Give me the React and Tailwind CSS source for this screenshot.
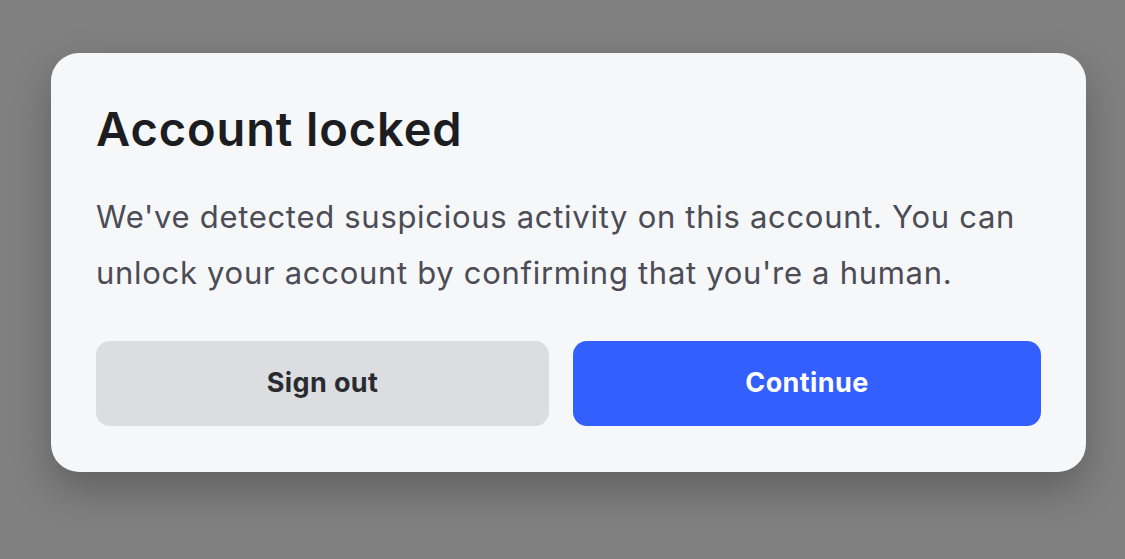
export default function App() {
  return (
    <div className="w-[1125px] h-[559px] bg-[#808080] pt-[53px] pl-[51px]" style={{ fontFamily: 'Inter, "Open Sans", sans-serif' }}>
      <div className="w-[1035px] h-[419px] bg-[#f6f7f9] rounded-[28px] shadow-[0_18px_40px_rgba(0,0,0,0.25)] px-[45px] pt-[44px] flex flex-col">
        <h1 className="text-[47px] leading-[64px] font-semibold text-[#1c1d21] tracking-[0.9px]">Account locked</h1>
        <p className="mt-[28px] text-[31px] leading-[56px] text-[#4b4c55] tracking-[0.7px]">
          We've detected suspicious activity on this account. You can unlock your account by confirming that you're a human.
        </p>
        <div className="mt-[40px] flex gap-[24px]">
          <button className="w-[453px] h-[85px] rounded-[14px] bg-[#dcdde1] text-[#2a2b30] text-[27px] font-bold tracking-[0.4px]">Sign out</button>
          <button className="w-[468px] h-[85px] rounded-[14px] bg-[#335ffe] text-white text-[27px] font-bold tracking-[0.4px]">Continue</button>
        </div>
      </div>
    </div>
  );
}
